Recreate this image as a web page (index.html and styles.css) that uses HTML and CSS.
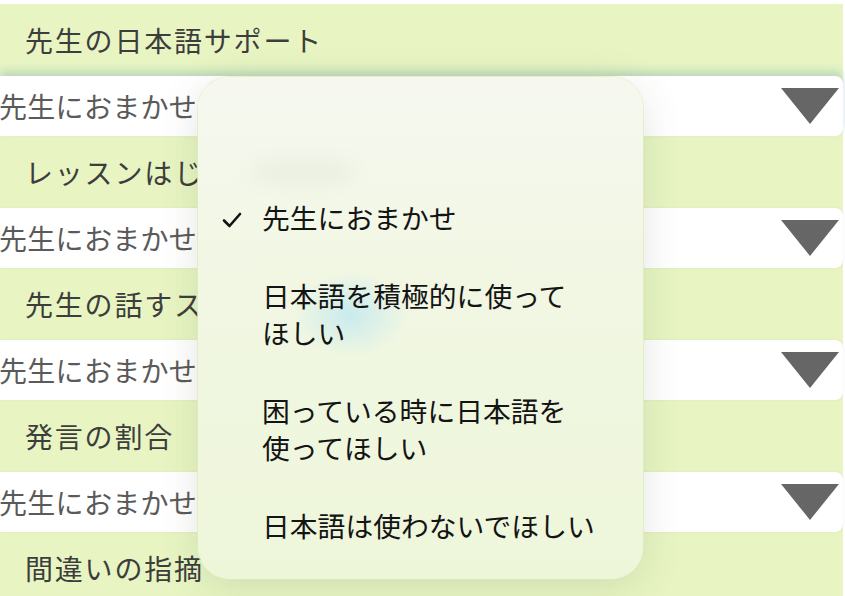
FILE: index.html
```html
<!DOCTYPE html>
<html lang="ja">
<head>
<meta charset="utf-8">
<link rel="stylesheet" href="styles.css">
</head>
<body>
<div class="page">
  <div class="label">先生の日本語サポート</div>
  <div class="select select-open"><span class="value">先生におまかせ</span><svg class="arrow" viewBox="0 0 60 38"><polygon points="1,1 59,1 30,37"/></svg></div>
  <div class="label">レッスンはじめの雑談</div>
  <div class="select"><span class="value">先生におまかせ</span><svg class="arrow" viewBox="0 0 60 38"><polygon points="1,1 59,1 30,37"/></svg></div>
  <div class="label">先生の話すスピード</div>
  <div class="select"><span class="value">先生におまかせ</span><svg class="arrow" viewBox="0 0 60 38"><polygon points="1,1 59,1 30,37"/></svg></div>
  <div class="label">発言の割合</div>
  <div class="select"><span class="value">先生におまかせ</span><svg class="arrow" viewBox="0 0 60 38"><polygon points="1,1 59,1 30,37"/></svg></div>
  <div class="label">間違いの指摘</div>
</div>
<div class="menu">
  <div class="smudge"></div>
  <div class="glow"></div>
  <div class="item checked"><svg class="check" viewBox="0 0 20 16"><path d="M2 8.5 L7.5 14 L18 2"/></svg>先生におまかせ</div>
  <div class="item">日本語を積極的に使って<br>ほしい</div>
  <div class="item">困っている時に日本語を<br>使ってほしい</div>
  <div class="item">日本語は使わないでほしい</div>
</div>
</body>
</html>
```
FILE: styles.css
```css
html, body {
  margin: 0;
  padding: 0;
  background: #ffffff;
  overflow: hidden;
  height: 596px;
}
body {
  font-family: "Noto Sans CJK JP", "Noto Sans", sans-serif;
  position: relative;
}
.page {
  margin-top: 4px;
  margin-right: 2px;
  background: #e8f5c3;
  display: flex;
  flex-direction: column;
}
.label {
  height: 72px;
  display: flex;
  align-items: center;
  padding-left: 25px;
  font-size: 28px;
  letter-spacing: 1.8px;
  color: #3d3d3d;
}
.select {
  height: 60px;
  background: #ffffff;
  border-radius: 0 8px 8px 0;
  display: flex;
  align-items: center;
  justify-content: space-between;
  padding-right: 3px;
  font-size: 28px;
  letter-spacing: 0.3px;
  color: #5a5a5a;
  box-shadow: 0 0 3px rgba(0,0,0,0.06);
}
.select-open {
  box-shadow: 0 -5px 9px rgba(110,160,170,0.35);
  position: relative;
}
.value {
  margin-left: -1px;
}
.arrow {
  width: 60px;
  height: 38px;
  fill: #666666;
  filter: blur(0.4px);
}
.menu {
  position: absolute;
  left: 198px;
  top: 77px;
  width: 445px;
  height: 502px;
  box-sizing: border-box;
  padding-top: 102px;
  border-radius: 32px;
  background: linear-gradient(180deg, #f6f8f0 0%, #f1f7e3 40%, #eef6da 100%);
  box-shadow: 0 8px 40px rgba(60,80,40,0.14), 0 0 0 1px rgba(238,247,200,0.8);
  overflow: hidden;
}
.smudge {
  position: absolute;
  left: 50px;
  top: 82px;
  width: 110px;
  height: 26px;
  border-radius: 50%;
  background: rgba(0,0,0,0.035);
  filter: blur(10px);
}
.glow {
  position: absolute;
  left: 95px;
  top: 195px;
  width: 115px;
  height: 85px;
  border-radius: 50%;
  background: radial-gradient(closest-side, rgba(180,228,245,0.65), rgba(180,228,245,0));
}
.item {
  position: relative;
  padding: 20px 0 20px 64px;
  font-size: 27.8px;
  line-height: 37.5px;
  color: #141414;
}
.check {
  position: absolute;
  left: 24px;
  top: 33px;
  width: 20px;
  height: 16px;
  fill: none;
  stroke: #141414;
  stroke-width: 2.6;
  stroke-linecap: round;
  stroke-linejoin: round;
}
```
